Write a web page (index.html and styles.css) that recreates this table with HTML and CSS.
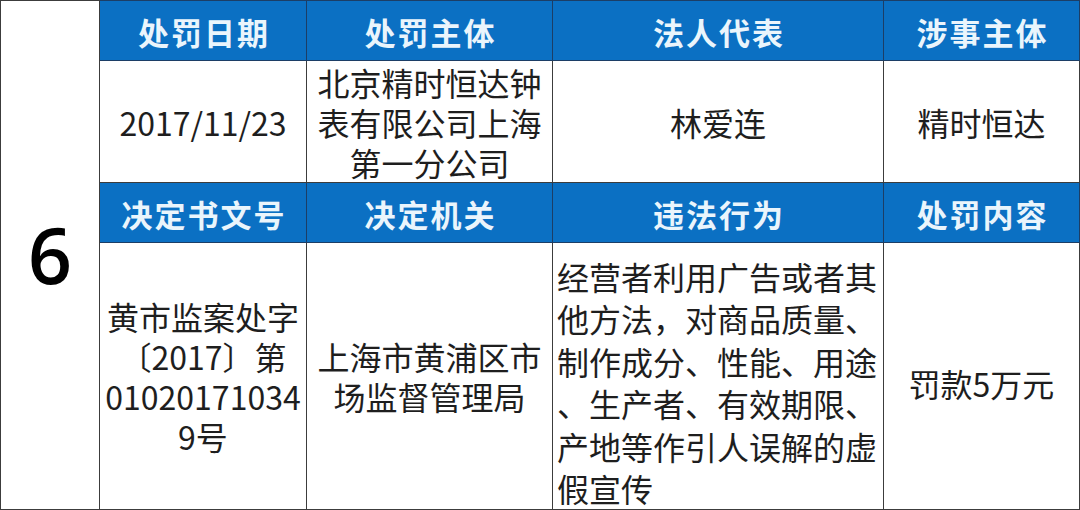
FILE: index.html
```html
<!DOCTYPE html>
<html lang="zh-CN">
<head>
<meta charset="utf-8">
<title>处罚信息</title>
<link rel="stylesheet" href="styles.css">
</head>
<body>
<table class="penalty">
  <colgroup>
    <col class="c0"><col class="c1"><col class="c2"><col class="c3"><col class="c4">
  </colgroup>
  <tr class="head">
    <td class="num" rowspan="4">6</td>
    <th>处罚日期</th>
    <th>处罚主体</th>
    <th>法人代表</th>
    <th>涉事主体</th>
  </tr>
  <tr class="row1">
    <td>2017/11/23</td>
    <td>北京精时恒达钟<br>表有限公司上海<br>第一分公司</td>
    <td>林爱连</td>
    <td>精时恒达</td>
  </tr>
  <tr class="head">
    <th>决定书文号</th>
    <th>决定机关</th>
    <th>违法行为</th>
    <th>处罚内容</th>
  </tr>
  <tr class="row2">
    <td>黄市监案处字<br>〔2017〕第<br>01020171034<br>9号</td>
    <td>上海市黄浦区市<br>场监督管理局</td>
    <td class="desc">经营者利用广告或者其<br>他方法，对商品质量、<br>制作成分、性能、用途<br>、生产者、有效期限、<br>产地等作引人误解的虚<br>假宣传</td>
    <td class="fine">罚款5万元</td>
  </tr>
</table>
</body>
</html>
```

FILE: styles.css
```css
html, body {
  margin: 0;
  padding: 0;
  background: #ffffff;
}

.penalty {
  border-collapse: collapse;
  table-layout: fixed;
  width: 1079px;
  font-family: "Noto Sans CJK SC", "Noto Sans", sans-serif;
}

.c0 { width: 99px; }
.c1 { width: 207px; }
.c2 { width: 246px; }
.c3 { width: 331px; }
.c4 { width: 196px; }

.penalty td {
  border: 1px solid #3c3c3c;
  color: #1e1e1e;
  font-size: 32px;
  line-height: 40px;
  text-align: center;
  vertical-align: middle;
  white-space: nowrap;
  padding: 0 2px;
}

.penalty th {
  border: 1px solid #1c3e66;
  background: #0b70c3;
  color: #eaf5fc;
  font-size: 31px;
  font-weight: 700;
  letter-spacing: 2px;
  text-indent: 2px;
  padding: 2px 0 0 0;
  line-height: 40px;
  text-align: center;
  vertical-align: middle;
}

.head { height: 60px; }
.row1 { height: 122px; }
.row2 { height: 266px; }

.penalty td.num {
  font-family: "Open Sans", "Noto Sans", sans-serif;
  font-size: 77px;
  font-weight: 600;
  color: #000000;
  line-height: 80px;
  padding: 0;
}

.penalty td.desc {
  text-align: left;
  line-height: 42.4px;
  padding: 12px 0 0 4px;
  vertical-align: top;
}

.penalty td.fine {
  padding-top: 14px;
}
```
